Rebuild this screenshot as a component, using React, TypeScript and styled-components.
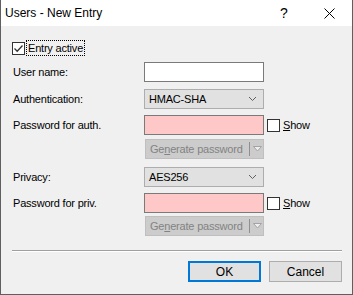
import { Fragment } from 'react'
import styled, { createGlobalStyle } from 'styled-components'

const Globals = createGlobalStyle`
* {
	box-sizing: border-box;
}

body {
	margin: 0;
	padding: 0;
	background: #ffffff;
	font-family: 'Liberation Sans', Arial, sans-serif;
}
`

const Window = styled.div`
	width: 353px;
	height: 295px;
	display: flex;
	flex-direction: column;
	background: #f0f0f0;
	border: 1px solid #5f5f5f;
	border-top: none;
`

const TitleBar = styled.div`
	height: 26px;
	flex: none;
	display: flex;
	align-items: center;
	background: #ffffff;
	padding-left: 4px;
	font-size: 12px;
	color: #000000;
`

const Title = styled.span`
	flex: 1;
`

const TitleButton = styled.span<{ $w: number }>`
	width: ${(p) => p.$w}px;
	height: 26px;
	display: flex;
	align-items: center;
	justify-content: center;
	font-size: 14px;
`

const Body = styled.div`
	flex: 1;
	display: flex;
	flex-direction: column;
	padding: 15px 10px 0 11px;
	font-size: 11px;
	letter-spacing: -0.2px;
	color: #000000;
`

const CheckRow = styled.label`
	display: flex;
	align-items: center;
	height: 14px;
	gap: 2px;
`

const Box = styled.span`
	width: 13px;
	height: 13px;
	flex: none;
	border: 1px solid #333333;
	background: #ffffff;
	display: flex;
	align-items: center;
	justify-content: center;
`

const FocusText = styled.span`
	outline: 1px dotted #000000;
	outline-offset: 0;
	padding: 0 1px;
	line-height: 14px;
`

const Row = styled.div<{ $mt: number }>`
	display: flex;
	align-items: center;
	height: 20px;
	margin-top: ${(p) => p.$mt}px;
`

const Label = styled.span`
	width: 132px;
	flex: none;
	padding-left: 1px;
`

const TextInput = styled.div<{ $bad?: boolean }>`
	width: 120px;
	height: 20px;
	flex: none;
	background: ${(p) => (p.$bad ? '#ffc8c8' : '#ffffff')};
	border: 1px solid #7a7a7a;
`

const Select = styled.div`
	width: 120px;
	height: 20px;
	flex: none;
	display: flex;
	align-items: center;
	justify-content: space-between;
	padding: 0 6px 0 4px;
	background: #e1e1e1;
	border: 1px solid #adadad;
`

const ShowCheck = styled.label`
	display: flex;
	align-items: center;
	gap: 3px;
	margin-left: 3px;
`

const Underline = styled.span`
	text-decoration: underline;
`

const SplitButton = styled.div`
	width: 119px;
	height: 20px;
	margin-left: 1px;
	flex: none;
	display: flex;
	align-items: center;
	padding-left: 4px;
	background: #cccccc;
	border: 1px solid #bfbfbf;
	color: #838383;
`

const SplitText = styled.span`
	flex: 1;
`

const SplitDivider = styled.span`
	width: 1px;
	height: 14px;
	background: #8f8f8f;
	margin-right: 2px;
`

const ArrowCell = styled.span`
	width: 11px;
	display: flex;
	align-items: center;
	justify-content: center;
`

const Separator = styled.div`
	height: 2px;
	margin-top: 14px;
	border-top: 1px solid #a0a0a0;
	border-bottom: 1px solid #ffffff;
`

const ButtonRow = styled.div`
	display: flex;
	justify-content: flex-end;
	gap: 8px;
	margin-top: 9px;
`

const Button = styled.div<{ $default?: boolean }>`
	width: 73px;
	height: 21px;
	display: flex;
	align-items: center;
	justify-content: center;
	background: #e1e1e1;
	border: ${(p) => (p.$default ? '2px solid #0078d7' : '1px solid #adadad')};
	font-size: 12px;
	letter-spacing: 0;
`

function Check() {
	return (
		<svg width="11" height="11" viewBox="0 0 11 11">
			<path d="M1.5 5.5 L4.2 8.2 L9.5 2.5" fill="none" stroke="#333333" strokeWidth="1.3" />
		</svg>
	)
}

function Chevron() {
	return (
		<svg width="9" height="6" viewBox="0 0 9 6">
			<path d="M1 1 L4.5 4.5 L8 1" fill="none" stroke="#606060" strokeWidth="1" />
		</svg>
	)
}

function GenerateButton({ mt }: { mt: number }) {
	return (
		<Row $mt={mt}>
			<Label />
			<SplitButton>
				<SplitText>
					Ge<Underline>n</Underline>erate password
				</SplitText>
				<SplitDivider />
				<ArrowCell>
					<svg width="9" height="6" viewBox="0 0 9 6">
						<path d="M0.5 0.5 L8.5 0.5 L4.5 5 Z" fill="#eeeeee" stroke="#a3a3a3" strokeWidth="1" />
					</svg>
				</ArrowCell>
			</SplitButton>
		</Row>
	)
}

function PasswordRow({ label, mt }: { label: string; mt: number }) {
	return (
		<Row $mt={mt}>
			<Label>{label}</Label>
			<TextInput $bad />
			<ShowCheck>
				<Box />
				<span>
					<Underline>S</Underline>how
				</span>
			</ShowCheck>
		</Row>
	)
}

export default function App() {
	return (
		<Fragment>
			<Globals />
			<Window>
				<TitleBar>
					<Title>Users - New Entry</Title>
					<TitleButton $w={44}>?</TitleButton>
					<TitleButton $w={46}>
						<svg width="11" height="11" viewBox="0 0 11 11">
							<path d="M0.5 0.5 L10.5 10.5 M10.5 0.5 L0.5 10.5" stroke="#000000" strokeWidth="1" />
						</svg>
					</TitleButton>
				</TitleBar>
				<Body>
					<CheckRow>
						<Box>
							<Check />
						</Box>
						<FocusText>Entry active</FocusText>
					</CheckRow>
					<Row $mt={7}>
						<Label>User name:</Label>
						<TextInput />
					</Row>
					<Row $mt={7}>
						<Label>Authentication:</Label>
						<Select>
							<span>HMAC-SHA</span>
							<Chevron />
						</Select>
					</Row>
					<PasswordRow label="Password for auth." mt={6} />
					<GenerateButton mt={4} />
					<Row $mt={8}>
						<Label>Privacy:</Label>
						<Select>
							<span>AES256</span>
							<Chevron />
						</Select>
					</Row>
					<PasswordRow label="Password for priv." mt={6} />
					<GenerateButton mt={3} />
					<Separator />
					<ButtonRow>
						<Button $default>OK</Button>
						<Button>Cancel</Button>
					</ButtonRow>
				</Body>
			</Window>
		</Fragment>
	)
}
